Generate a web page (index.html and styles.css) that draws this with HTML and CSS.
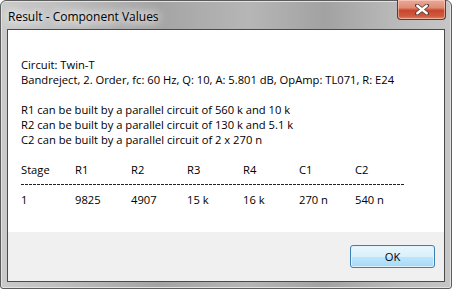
FILE: index.html
```html
<!DOCTYPE html>
<html lang="en">
  <head>
    <meta charset="UTF-8" />
    <title>Result - Component Values</title>
    <link rel="stylesheet" href="styles.css">
  </head>
  <body>
    <div class="window">
      <div class="titlebar">
        <span class="title">Result - Component Values</span>
        <div class="close">
          <svg width="14" height="11" viewBox="0 0 14 11">
            <path d="M2 1.5 L12 9.5 M12 1.5 L2 9.5" stroke="#5b3a33" stroke-width="4" stroke-linecap="round" />
            <path d="M2.3 1.8 L11.7 9.2 M11.7 1.8 L2.3 9.2" stroke="#fff" stroke-width="2.4" stroke-linecap="round" />
          </svg>
        </div>
      </div>
      <div class="client">
        <div class="report">
          <p>Circuit: Twin-T</p>
          <p>Bandreject, 2. Order, fc: 60 Hz, Q: 10, A: 5.801 dB, OpAmp: TL071, R: E24</p>
          <p class="blank"></p>
          <p>R1 can be built by a parallel circuit of 560 k and 10 k</p>
          <p>R2 can be built by a parallel circuit of 130 k and 5.1 k</p>
          <p>C2 can be built by a parallel circuit of 2 x 270 n</p>
          <p class="blank"></p>
          <div class="row">
            <span>Stage</span><span>R1</span><span>R2</span><span>R3</span><span>R4</span><span>C1</span><span>C2</span>
          </div>
          <div class="dashes"></div>
          <div class="row">
            <span>1</span><span>9825</span><span>4907</span><span>15 k</span><span>16 k</span><span>270 n</span><span>540 n</span>
          </div>
        </div>
        <div class="footer">
          <button class="ok">OK</button>
        </div>
      </div>
    </div>
  </body>
</html>
```

FILE: styles.css
```css
* {
  margin: 0;
  padding: 0;
  box-sizing: border-box;
}
body {
  background-color: #fff;
  font-family: "Open Sans", "DejaVu Sans", sans-serif;
  font-size: 11px;
  color: #000;
}
.window {
  width: 452px;
  height: 289px;
  border: 1px solid #5c5c5c;
  border-radius: 6px 6px 3px 3px;
  background: linear-gradient(90deg, #cacaca 0%, #c0c0c0 12%, #a4a4a4 35%, #b6b6b6 55%, #a2a2a2 72%, #bababa 88%, #c6c6c6 100%);
  padding: 0 6px 6px 6px;
  display: flex;
  flex-direction: column;
  box-shadow: inset 0 0 0 1px #e2e2e2;
}
.titlebar {
  height: 28px;
  display: flex;
  align-items: flex-start;
  justify-content: space-between;
}
.title {
  margin: 7px 0 0 1px;
  font-size: 12px;
  color: #000;
  text-shadow: 0 0 8px #fff, 0 0 12px #fff, 0 0 14px #fff;
}
.close {
  width: 49px;
  height: 20px;
  margin: -1px -1px 0 0;
  border: 1px solid #5e3a33;
  border-top: none;
  border-radius: 0 0 4px 4px;
  background: linear-gradient(180deg, #eba997 0%, #dd8d76 40%, #c8462c 55%, #d05a3d 85%, #df8a6c 100%);
  display: flex;
  align-items: center;
  justify-content: center;
  box-shadow: inset 0 0 0 1px rgba(255, 220, 210, 0.5);
}
.client {
  flex: 1;
  border: 1px solid #4a4a4a;
  background-color: #f0f0f0;
  display: flex;
  flex-direction: column;
}
.report {
  background-color: #fff;
  height: 202px;
  padding: 27px 0 0 13px;
  line-height: 15px;
  font-size: 11.2px;
  color: #000;
}
.report p {
  height: 15px;
  white-space: nowrap;
}
.row {
  display: grid;
  grid-template-columns: 54px repeat(6, 56px);
  height: 15px;
  white-space: nowrap;
}
.dashes {
  height: 15px;
  width: 383px;
  background: repeating-linear-gradient(90deg, #222 0 3px, transparent 3px 4px) 0 7px / 100% 1px no-repeat;
}
.footer {
  flex: 1;
  display: flex;
  justify-content: flex-end;
  align-items: flex-start;
  padding: 13px 9px 0 0;
}
.ok {
  width: 85px;
  height: 23px;
  border: 1px solid #3c7fb1;
  border-radius: 3px;
  background: linear-gradient(180deg, #eaf6fd 0%, #d9f0fc 50%, #bee6fd 51%, #a7d9f5 100%);
  box-shadow: inset 0 0 0 1px #dff2fc;
  font-family: "Open Sans", "DejaVu Sans", sans-serif;
  font-size: 11.2px;
  color: #000;
}
```
